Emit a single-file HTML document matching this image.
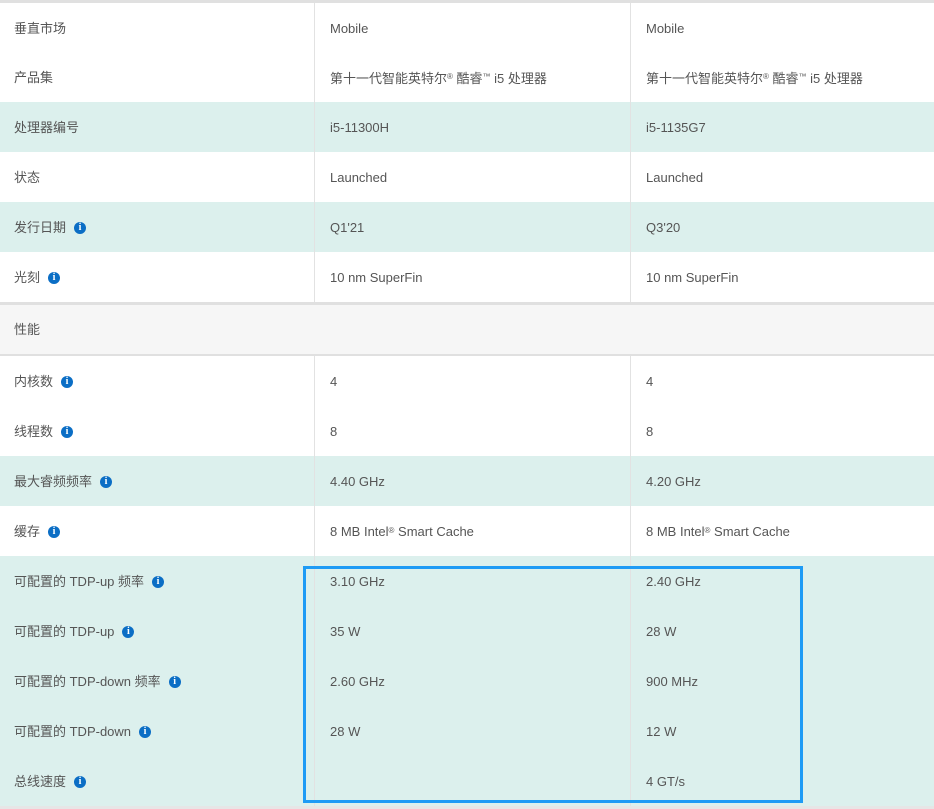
<!DOCTYPE html>
<html><head><meta charset="utf-8"><style>
*{margin:0;padding:0;box-sizing:border-box}
body{width:934px;height:809px;overflow:hidden;background:#fff;font-family:"Liberation Sans","Noto Sans CJK SC",sans-serif;font-size:13px;color:#555;position:relative}
.r{position:absolute;left:0;width:934px;height:50px}
.t{background:#dcf0ed}
.c{position:absolute;top:0;height:100%;display:flex;align-items:center;white-space:nowrap}
.c1{left:14px;padding-bottom:2px}.c2{left:330px}.c3{left:646px}
.vl{position:absolute;top:3px;width:1px;background:#e2e2e2}
.i{display:inline-block;width:12px;height:12px;border-radius:50%;background:#0b6ec5;color:#fff;font-size:10px;font-weight:bold;line-height:12px;text-align:center;margin-left:8px;margin-top:3px;font-family:"Liberation Serif",serif}
sup{font-size:8px;line-height:0;vertical-align:5px}
</style></head><body>
<div style="position:absolute;left:0;top:0;width:934px;height:3px;background:#e0e0e0"></div>
<div class="r" style="top:3px"><span class="c c1">垂直市场</span><span class="c c2">Mobile</span><span class="c c3">Mobile</span></div>
<div class="r" style="top:52px"><span class="c c1">产品集</span><span class="c c2">第十一代智能英特尔<sup>®</sup>&nbsp;酷睿<sup>™</sup>&nbsp;i5 处理器</span><span class="c c3">第十一代智能英特尔<sup>®</sup>&nbsp;酷睿<sup>™</sup>&nbsp;i5 处理器</span></div>
<div class="r t" style="top:102px"><span class="c c1">处理器编号</span><span class="c c2">i5-11300H</span><span class="c c3">i5-1135G7</span></div>
<div class="r" style="top:152px"><span class="c c1">状态</span><span class="c c2">Launched</span><span class="c c3">Launched</span></div>
<div class="r t" style="top:202px"><span class="c c1">发行日期<span class="i">i</span></span><span class="c c2">Q1'21</span><span class="c c3">Q3'20</span></div>
<div class="r" style="top:252px"><span class="c c1">光刻<span class="i">i</span></span><span class="c c2">10 nm SuperFin</span><span class="c c3">10 nm SuperFin</span></div>
<div class="vl" style="left:314px;height:299px"></div>
<div class="vl" style="left:630px;height:299px"></div>
<div style="position:absolute;left:0;top:302px;width:934px;height:54px;background:#f6f6f6;border-top:3px solid #e0e0e0;border-bottom:2px solid #e0e0e0"><span class="c c1">性能</span></div>
<div class="r" style="top:356px"><span class="c c1">内核数<span class="i">i</span></span><span class="c c2">4</span><span class="c c3">4</span></div>
<div class="r" style="top:406px"><span class="c c1">线程数<span class="i">i</span></span><span class="c c2">8</span><span class="c c3">8</span></div>
<div class="r t" style="top:456px"><span class="c c1">最大睿频频率<span class="i">i</span></span><span class="c c2">4.40 GHz</span><span class="c c3">4.20 GHz</span></div>
<div class="r" style="top:506px"><span class="c c1">缓存<span class="i">i</span></span><span class="c c2">8 MB Intel<sup>®</sup>&nbsp;Smart Cache</span><span class="c c3">8 MB Intel<sup>®</sup>&nbsp;Smart Cache</span></div>
<div class="r t" style="top:556px;height:250px"></div>
<div class="r" style="top:556px"><span class="c c1">可配置的 TDP-up 频率<span class="i">i</span></span><span class="c c2">3.10 GHz</span><span class="c c3">2.40 GHz</span></div>
<div class="r" style="top:606px"><span class="c c1">可配置的 TDP-up<span class="i">i</span></span><span class="c c2">35 W</span><span class="c c3">28 W</span></div>
<div class="r" style="top:656px"><span class="c c1">可配置的 TDP-down 频率<span class="i">i</span></span><span class="c c2">2.60 GHz</span><span class="c c3">900 MHz</span></div>
<div class="r" style="top:706px"><span class="c c1">可配置的 TDP-down<span class="i">i</span></span><span class="c c2">28 W</span><span class="c c3">12 W</span></div>
<div class="r" style="top:756px"><span class="c c1">总线速度<span class="i">i</span></span><span class="c c3">4 GT/s</span></div>
<div class="vl" style="left:314px;top:356px;height:450px"></div>
<div class="vl" style="left:630px;top:356px;height:450px"></div>
<div style="position:absolute;left:0;top:806px;width:934px;height:3px;background:#e6e6e6"></div>
<div style="position:absolute;left:303px;top:566px;width:500px;height:237px;border:3px solid #1e9bf5"></div>
</body></html>
